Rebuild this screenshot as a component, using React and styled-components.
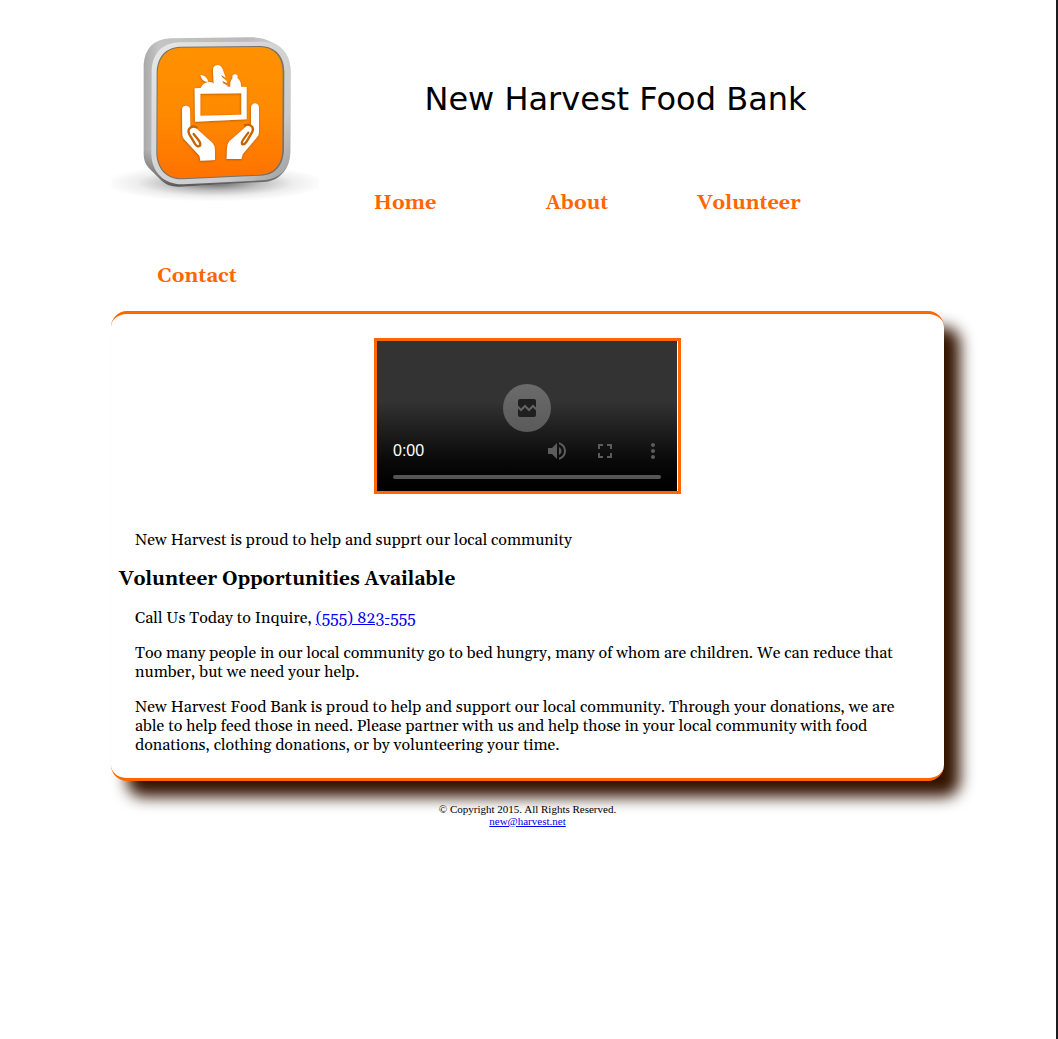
import React from "react";
import styled, { createGlobalStyle } from "styled-components";

const accent = "#ff6600";
const serif = '"Liberation Serif", serif';
const wideSerif = 'Georgia, Gelasio, "DejaVu Serif Condensed", "DejaVu Serif", serif';

const GlobalStyle = createGlobalStyle`
  * { box-sizing: border-box; }
  html { background: #fff; }
  body { margin: 0; font-family: ${serif}; color: #000; }
`;

const Page = styled.div`
  min-height: 100vh;
  padding: 34px 112px 0 111px;
  border-right: 2px solid #1c1c1e;
  background: #fff;
`;

const Header = styled.header`
  display: flow-root;
`;

const Logo = styled.svg`
  float: left;
  display: block;
  width: 208px;
  height: 170px;
`;

const Title = styled.h1`
  margin: 0;
  padding-right: 32px;
  font: 400 32px/131px Verdana, "DejaVu Sans", sans-serif;
  text-align: center;
`;

const NavList = styled.ul`
  margin: 0;
  padding: 0;
  list-style: none;
`;

const NavItem = styled.li`
  float: left;
  width: 172px;
  text-align: center;
`;

const NavLink = styled.a`
  display: block;
  padding-top: 4px;
  color: ${accent};
  font-family: ${wideSerif};
  font-size: 20px;
  font-weight: 700;
  line-height: 69px;
  text-decoration: none;
`;

const Card = styled.main`
  padding: 24px 8px 23px;
  border: solid ${accent};
  border-width: 3px 0;
  border-radius: 16px;
  background: #fff;
  box-shadow: 16px 16px 15px #331400;
  font-family: ${wideSerif};
`;

const Player = styled.section`
  width: 307px;
  margin: 0 auto 37px;
  padding-right: 1px;
  border: 3px solid ${accent};
`;

const Screen = styled.div`
  height: 150px;
  padding-top: 43px;
  background: linear-gradient(#333 0, #333 60px, #1a1a1a 95px, #090909 120px, #000 145px);
`;

const PlayButton = styled.button`
  display: flex;
  align-items: center;
  justify-content: center;
  width: 48px;
  height: 48px;
  margin: 0 auto;
  padding: 0;
  border: 0;
  border-radius: 50%;
  background: linear-gradient(#6b6b6b, #5a5a5a);
  color: #1f1f1f;
`;

const Controls = styled.div`
  display: flex;
  align-items: center;
  height: 38px;
  padding-left: 16px;
`;

const Time = styled.span`
  flex: 1;
  color: #fff;
  font: 16px/18px "Liberation Sans", sans-serif;
`;

const ControlButton = styled.button`
  display: flex;
  align-items: center;
  justify-content: center;
  width: 48px;
  height: 38px;
  padding: 0;
  border: 0;
  background: none;
  color: #5c5c5c;
`;

const Timeline = styled.input`
  appearance: none;
  display: block;
  width: 268px;
  height: 4px;
  margin: 5px auto 0;
  border-radius: 2px;
  background: #555;
  &::-webkit-slider-thumb { appearance: none; width: 0; height: 0; }
`;

const Text = styled.p`
  margin: 0 16px 16px;
  font-size: 16px;
  line-height: 19px;
`;

const Heading = styled.h2`
  margin: 18px 0;
  font-size: 19px;
  line-height: 23px;
`;

const Link = styled.a`
  color: #0000ee;
`;

const Footer = styled.footer`
  padding-top: 22px;
  font-size: 11px;
  line-height: 12px;
  text-align: center;
`;

const LastText = styled(Text)`
  margin-bottom: 0;
`;

const iconPaths = {
  broken:
    "M21 5v6.59l-3-3.01-4 4.01-4-4-4 4-3-3.01V5c0-1.1.9-2 2-2h14c1.1 0 2 .9 2 2zm-3 6.42l3 3.01V19c0 1.1-.9 2-2 2H5c-1.1 0-2-.9-2-2v-6.58l3 2.99 4-4 4 4 4-3.99z",
  volume:
    "M3 9v6h4l5 5V4L7 9H3zm13.5 3c0-1.77-1.02-3.29-2.5-4.03v8.05c1.48-.73 2.5-2.25 2.5-4.02zM14 3.23v2.06c2.89.86 5 3.54 5 6.71s-2.11 5.85-5 6.71v2.06c4.01-.91 7-4.49 7-8.77s-2.99-7.86-7-8.77z",
  fullscreen:
    "M7 14H5v5h5v-2H7v-3zm-2-4h2V7h3V5H5v5zm12 7h-3v2h5v-5h-2v3zM14 5v2h3v3h2V5h-5z",
  more:
    "M12 8c1.1 0 2-.9 2-2s-.9-2-2-2-2 .9-2 2 .9 2 2 2zm0 2c-1.1 0-2 .9-2 2s.9 2 2 2 2-.9 2-2-.9-2-2-2zm0 6c-1.1 0-2 .9-2 2s.9 2 2 2 2-.9 2-2-.9-2-2-2z",
};

const Icon = ({ name }) => (
  <svg width="24" height="24" viewBox="0 0 24 24" fill="currentColor" aria-hidden="true">
    <path d={iconPaths[name]} />
  </svg>
);

const bodyPath =
  "M210 40 L450 37 C480 37 500 42 515 52 C552 66 572 96 572 140 L571 385 C570 430 540 466 500 470 L240 485 C215 486 200 480 186 468 L146 428 Q131 412 131 388 L131 118 Q137 45 210 40Z";

const FoodBankLogo = () => (
  <Logo viewBox="33 27 624 510" role="img" aria-label="New Harvest logo">
    <defs>
      <linearGradient id="face" x1="0" y1="0" x2="0" y2="1">
        <stop offset="0" stopColor="#ff9100" />
        <stop offset="0.5" stopColor="#ff8a00" />
        <stop offset="1" stopColor="#ff7200" />
      </linearGradient>
      <linearGradient id="side" x1="0" y1="0" x2="1" y2="0">
        <stop offset="0" stopColor="#a9a9a9" />
        <stop offset="0.1" stopColor="#c4c4c4" />
        <stop offset="0.7" stopColor="#bababa" />
        <stop offset="1" stopColor="#d6d6d6" />
      </linearGradient>
      <linearGradient id="base" x1="0" y1="0" x2="0" y2="1">
        <stop offset="0.75" stopColor="#555" stopOpacity="0" />
        <stop offset="1" stopColor="#444" stopOpacity="0.85" />
      </linearGradient>
      <linearGradient id="rim" x1="0" y1="0" x2="1" y2="1">
        <stop offset="0" stopColor="#e8e8e8" />
        <stop offset="0.3" stopColor="#dadada" />
        <stop offset="0.75" stopColor="#cacaca" />
        <stop offset="1" stopColor="#9a9a9a" />
      </linearGradient>
      <radialGradient id="ground">
        <stop offset="0" stopColor="#000" stopOpacity="0.6" />
        <stop offset="0.4" stopColor="#000" stopOpacity="0.25" />
        <stop offset="0.7" stopColor="#000" stopOpacity="0.07" />
        <stop offset="1" stopColor="#000" stopOpacity="0" />
      </radialGradient>
      <filter id="drop" x="-10%" y="-10%" width="120%" height="120%">
        <feDropShadow dx="-1" dy="2" stdDeviation="3" floodColor="#8a4300" floodOpacity="0.7" />
      </filter>
      <filter id="soft">
        <feGaussianBlur stdDeviation="2" />
      </filter>
    </defs>
    <ellipse cx="345" cy="474" rx="335" ry="56" fill="url(#ground)" />
    <path d={bodyPath} fill="url(#side)" />
    <path d={bodyPath} fill="url(#base)" />
    <path d="M238 52 L484 50 C540 52 572 86 572 140 L571 376 C570 430 540 464 486 466 L250 478 C196 480 156 446 154 388 L155 138 C157 86 186 54 238 52Z" fill="url(#rim)" />
    <path d="M240 65 L482 63 C528 65 553 95 553 140 L552 374 C550 422 526 450 482 452 L250 463 C200 465 171 432 169 386 L170 142 C172 96 196 67 240 65Z" fill="#77726b" filter="url(#soft)" />
    <path d="M241 68 L481 66 C524 68 548 97 548 141 L547 373 C546 420 522 447 480 449 L250 460 C202 462 174 430 172 385 L173 144 C175 98 198 70 241 68Z" fill="url(#face)" />
    <g fill="#fff" filter="url(#drop)">
      <path d="M284 190 L302 189 Q308 176 322 172 Q335 169 344 178 L344 185 L391 185 Q389 171 397 160 L398 151 Q404 145 412 150 L413 160 Q424 170 423 185 L440 186 L440 283 L285 290Z M301 206 L301 272 L424 269 L424 205Z" fillRule="evenodd" />
      <path d="M342 188 L339 140 Q337 122 352 120 Q364 120 369 136 L377 158 L364 150 L366 156 L380 168 L381 174 L367 168 L369 174 L382 182 L383 188Z" />
      <path d="M301 150 Q317 149 325 170 Q307 173 301 150Z" />
      <path d="M246 254 Q247 242 258 242 Q270 243 270 254 L271 304 L284 306 L337 353 Q345 362 345 374 L345 405 L301 407 L299 393 L252 342 Q247 336 247 326Z" />
      <path d="M477 248 Q476 236 465 235 Q454 237 453 248 L453 299 L441 302 L388 349 Q381 357 381 370 L380 402 L424 402 L428 388 L471 337 Q477 330 477 320Z" />
    </g>
    <g fill="none" stroke="#c86400" strokeWidth="7" strokeLinecap="round">
      <path d="M290 307 Q276 300 268 311 Q263 318 268 328 L286 358 Q293 368 300 362 Q303 356 297 347 L281 327" />
      <path d="M434 301 Q448 295 457 306 Q461 313 456 322 L439 351 Q432 361 426 357 Q424 351 430 343 L445 323" />
    </g>
  </Logo>
);

const pages = ["Home", "About", "Volunteer", "Contact"];

export default function App() {
  return (
    <>
      <GlobalStyle />
      <Page>
        <Header>
          <FoodBankLogo />
          <Title>New Harvest Food Bank</Title>
          <nav>
            <NavList>
              {pages.map((page) => (
                <NavItem key={page}>
                  <NavLink href={`#${page.toLowerCase()}`}>{page}</NavLink>
                </NavItem>
              ))}
            </NavList>
          </nav>
        </Header>
        <Card>
          <Player aria-label="Video player">
            <Screen>
              <PlayButton type="button" aria-label="Video unavailable" disabled>
                <Icon name="broken" />
              </PlayButton>
              <Controls>
                <Time>0:00</Time>
                <ControlButton type="button" aria-label="Mute" disabled>
                  <Icon name="volume" />
                </ControlButton>
                <ControlButton type="button" aria-label="Full screen" disabled>
                  <Icon name="fullscreen" />
                </ControlButton>
                <ControlButton type="button" aria-label="More options" disabled>
                  <Icon name="more" />
                </ControlButton>
              </Controls>
              <Timeline type="range" aria-label="Video position" defaultValue="0" disabled />
            </Screen>
          </Player>
          <Text>New Harvest is proud to help and supprt our local community</Text>
          <Heading>Volunteer Opportunities Available</Heading>
          <Text>
            Call Us Today to Inquire, <Link href="tel:555823555">(555) 823-555</Link>
          </Text>
          <Text>
            Too many people in our local community go to bed hungry, many of whom are children. We
            can reduce that number, but we need your help.
          </Text>
          <LastText>
            New Harvest Food Bank is proud to help and support our local community. Through your
            donations, we are able to help feed those in need. Please partner with us and help those
            in your local community with food donations, clothing donations, or by volunteering your
            time.
          </LastText>
        </Card>
        <Footer>
          © Copyright 2015. All Rights Reserved.
          <br />
          <Link href="mailto:new@harvest.net">new@harvest.net</Link>
        </Footer>
      </Page>
    </>
  );
}
